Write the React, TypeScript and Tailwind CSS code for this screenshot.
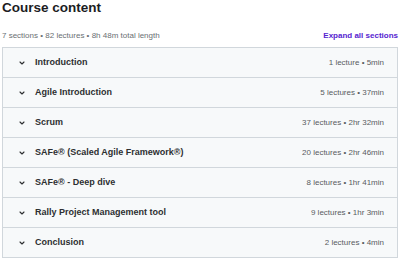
const sections = [
  { title: "Introduction", meta: "1 lecture • 5min" },
  { title: "Agile Introduction", meta: "5 lectures • 37min" },
  { title: "Scrum", meta: "37 lectures • 2hr 32min" },
  { title: "SAFe® (Scaled Agile Framework®)", meta: "20 lectures • 2hr 46min" },
  { title: "SAFe® - Deep dive", meta: "8 lectures • 1hr 41min" },
  { title: "Rally Project Management tool", meta: "9 lectures • 1hr 3min" },
  { title: "Conclusion", meta: "2 lectures • 4min" },
];

function Chevron() {
  return (
    <svg className="w-[6px] h-[4px] shrink-0 text-[#2d2f31]" viewBox="0 0 6 4" fill="none" stroke="currentColor">
      <path d="M1 1 L3 3 L5 1" strokeWidth={1.1} strokeLinecap="round" strokeLinejoin="round" />
    </svg>
  );
}

export default function App() {
  return (
    <div className="w-[400px] h-[259px] bg-white px-[2px] font-['Liberation_Sans',Arial,sans-serif] overflow-hidden">
      <h2 className="h-[16px] leading-[16px] text-[13.5px] font-bold text-[#1c1d1f]">Course content</h2>

      <div className="mt-[15px] h-[10px] flex items-center justify-between leading-[10px]">
        <span className="text-[8px] text-[#6a6f73]">7 sections • 82 lectures • 8h 48m total length</span>
        <button className="text-[8px] font-bold text-[#5624d0]">Expand all sections</button>
      </div>

      <div className="mt-[6px] border border-[#d1d7dc]">
        {sections.map((s, i) => {
          const last = i === sections.length - 1;
          return (
            <div
              key={s.title}
              className={`flex items-center bg-[#f7f9fa] pl-[16px] pr-[13px] ${last ? "h-[29px]" : "h-[30px] border-b border-[#d1d7dc]"}`}
            >
              <Chevron />
              <span className="ml-[10px] text-[9px] font-bold text-[#2d2f31]">{s.title}</span>
              <span className="ml-auto text-[8px] text-[#595c5f]">{s.meta}</span>
            </div>
          );
        })}
      </div>
    </div>
  );
}
